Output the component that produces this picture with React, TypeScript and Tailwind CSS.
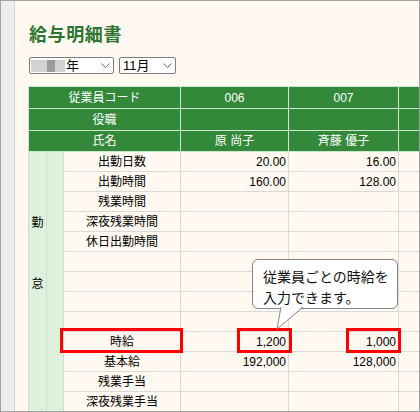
const rows = [
  { label: "出勤日数", a: "20.00", b: "16.00" },
  { label: "出勤時間", a: "160.00", b: "128.00" },
  { label: "残業時間", a: "", b: "" },
  { label: "深夜残業時間", a: "", b: "" },
  { label: "休日出勤時間", a: "", b: "" },
  { label: "", a: "", b: "" },
  { label: "", a: "", b: "" },
  { label: "", a: "", b: "" },
  { label: "", a: "", b: "" },
  { label: "時給", a: "1,200", b: "1,000" },
  { label: "基本給", a: "192,000", b: "128,000" },
  { label: "残業手当", a: "", b: "" },
  { label: "深夜残業手当", a: "", b: "" },
];

function Chevron() {
  return (
    <svg width="9" height="6" viewBox="0 0 9 6" className="shrink-0">
      <polyline points="0.5,0.5 4.5,4.5 8.5,0.5" fill="none" stroke="#6b6b6b" strokeWidth="1" />
    </svg>
  );
}

export default function App() {
  const head = "h-[22px] border border-[#cde8cd] bg-[#33883a] text-white text-center p-0 leading-none";
  const cell = "h-[20px] border border-[#d9d9d9] p-0 leading-none";

  return (
    <div className="w-[420px] h-[412px] border border-[#a3a3a3] flex overflow-hidden font-['Liberation_Sans','Noto_Sans_CJK_JP',sans-serif] text-black">
      {/* side strip */}
      <div className="w-[14px] shrink-0 bg-[#ededed] border-r border-[#d6d6d6]" />

      <main className="flex-1 min-w-0 overflow-hidden bg-[#fff9f1] pl-[13px] pt-[20px]">
        <h1 className="pl-[1px] text-[18px] leading-[24px] font-bold tracking-[0.6px] text-[#2f7431] font-['Noto_Sans_CJK_JP',sans-serif]">
          給与明細書
        </h1>

        {/* period selects */}
        <div className="mt-[12px] ml-[1px] flex gap-[5px]">
          <div className="w-[85px] h-[17px] bg-white border border-[#7d7d7d] rounded-[2px] flex items-center pl-[1px] pr-[3px]">
            <div className="w-[34px] h-[12px] bg-[#d2d2d2] flex justify-center">
              <div className="ml-[6px] w-[8px] h-full bg-[#9c9c9c]" />
            </div>
            <span className="ml-[1px] text-[13px] leading-none">年</span>
            <div className="flex-1" />
            <Chevron />
          </div>
          <div className="w-[57px] h-[17px] bg-white border border-[#7d7d7d] rounded-[2px] flex items-center pl-[3px] pr-[3px]">
            <span className="text-[13px] leading-none">11月</span>
            <div className="flex-1" />
            <Chevron />
          </div>
        </div>

        {/* payslip table */}
        <div className="relative mt-[12px] w-[400px]">
          <table className="table-fixed border-collapse w-[400px] text-[12px]">
            <colgroup>
              <col className="w-[18px]" />
              <col className="w-[17px]" />
              <col className="w-[117px]" />
              <col className="w-[108px]" />
              <col className="w-[110px]" />
              <col className="w-[30px]" />
            </colgroup>
            <thead>
              <tr>
                <td colSpan={3} className={head}>従業員コード</td>
                <td className={head}>006</td>
                <td className={head}>007</td>
                <td className={head} />
              </tr>
              <tr>
                <td colSpan={3} className={head}>役職</td>
                <td className={head} />
                <td className={head} />
                <td className={head} />
              </tr>
              <tr>
                <td colSpan={3} className={`${head} !h-[21px]`}>氏名</td>
                <td className={`${head} !h-[21px]`}>原 尚子</td>
                <td className={`${head} !h-[21px]`}>斉藤 優子</td>
                <td className={`${head} !h-[21px]`} />
              </tr>
            </thead>
            <tbody>
              {rows.map((r, i) => (
                <tr key={i}>
                  {i === 0 && (
                    <>
                      <td rowSpan={13} className="border border-[#d9d9d9] bg-[#ddf1dd] p-0 align-top">
                        <div className="flex flex-col items-center pt-[63px] text-[12px] leading-[16px]">
                          <span>勤</span>
                          <span className="mt-[45px]">怠</span>
                        </div>
                      </td>
                      <td rowSpan={13} className="border border-[#d9d9d9] bg-[#ddf1dd] p-0" />
                    </>
                  )}
                  <td className={`${cell} text-center`}>{r.label}</td>
                  <td className={`${cell} text-right pr-[2px]`}>{r.a}</td>
                  <td className={`${cell} text-right pr-[2px]`}>{r.b}</td>
                  <td className={cell} />
                </tr>
              ))}
            </tbody>
          </table>

          {/* highlight boxes */}
          <div className="absolute left-[32px] top-[242px] w-[123px] h-[25px] border-[3px] border-[#ff0000]" />
          <div className="absolute left-[209px] top-[242px] w-[55px] h-[25px] border-[3px] border-[#ff0000]" />
          <div className="absolute left-[318px] top-[242px] w-[55px] h-[25px] border-[3px] border-[#ff0000]" />

          {/* callout */}
          <div className="absolute left-[224px] top-[173px] w-[146px] h-[50px] bg-white border border-[#858585] rounded-[6px] pl-[10px] pt-[6px] text-[14px] leading-[21px] font-['Noto_Sans_CJK_JP',sans-serif] text-[#111]">
            <p>従業員ごとの時給を</p>
            <p>入力できます。</p>
            <svg width="30" height="24" viewBox="0 0 30 24" className="absolute left-[22px] top-[calc(100%-1px)] overflow-visible">
              <polygon points="6,-0.5 28,-0.5 2,22" fill="#ffffff" />
              <polyline points="6,0 2,22 28,0" fill="none" stroke="#858585" strokeWidth="1" />
            </svg>
          </div>
        </div>
      </main>
    </div>
  );
}
